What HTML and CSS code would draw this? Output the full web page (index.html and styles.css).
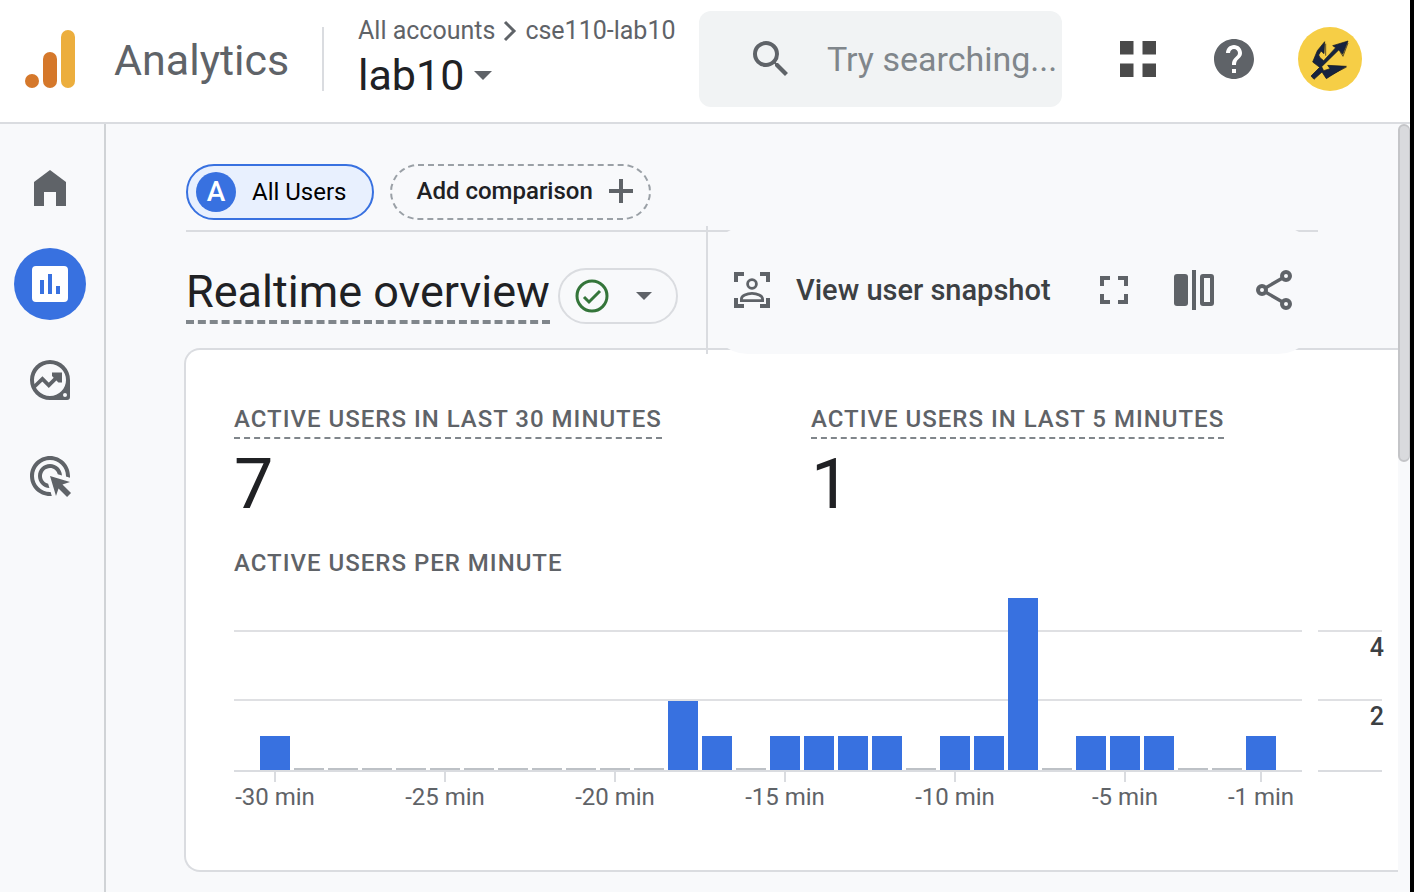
FILE: index.html
```html
<!DOCTYPE html>
<html lang="en">
<head>
<meta charset="utf-8">
<meta name="viewport" content="width=device-width, initial-scale=1">
<title>Analytics | Realtime overview</title>
<link rel="stylesheet" href="styles.css">
</head>
<body>
<header class="topbar">
  <a class="brand" href="#">
    <svg class="brand-logo" viewBox="0 0 52 60" aria-hidden="true">
      <circle cx="8" cy="52" r="7" fill="#d5782b"/>
      <rect x="19" y="23" width="14" height="36" rx="7" fill="#d5782b"/>
      <rect x="37" y="1" width="14" height="58" rx="7" fill="#ecae3d"/>
    </svg>
    <span class="brand-name">Analytics</span>
  </a>
  <div class="account">
    <nav class="crumbs" aria-label="Account">
      <a href="#">All accounts</a>
      <svg class="crumb-arrow" viewBox="0 0 14 22" aria-hidden="true"><path d="M2 2l9 9-9 9" fill="none" stroke="#5f6368" stroke-width="3"/></svg>
      <a href="#">cse110-lab10</a>
    </nav>
    <button class="property" type="button">lab10
      <svg class="caret" viewBox="0 0 18 9" aria-hidden="true"><path d="M0 0h18l-9 9z"/></svg>
    </button>
  </div>
  <label class="search">
    <svg class="icon" viewBox="0 0 24 24" aria-hidden="true"><path d="M15.5 14h-.79l-.28-.27A6.471 6.471 0 0 0 16 9.5 6.5 6.5 0 1 0 9.5 16c1.61 0 3.09-.59 4.23-1.57l.27.28v.79l5 4.99L20.49 19l-4.99-5zm-6 0C7.01 14 5 11.99 5 9.5S7.01 5 9.5 5 14 7.01 14 9.5 11.99 14 9.5 14z"/></svg>
    <input class="search-input" type="text" placeholder="Try searching..." aria-label="Search">
  </label>
  <div class="top-actions">
    <button class="icon-button" type="button" aria-label="Apps">
      <svg class="icon apps" viewBox="0 0 48 48" aria-hidden="true"><path d="M6 6h13.500v13.500H6zM28.500 6H42v13.500H28.500zM6 28.500h13.500V42H6zM28.500 28.500H42V42H28.500z"/></svg>
    </button>
    <button class="icon-button" type="button" aria-label="Help">
      <svg class="icon" viewBox="0 0 24 24" aria-hidden="true"><path d="M12 2C6.480 2 2 6.480 2 12s4.480 10 10 10 10-4.480 10-10S17.520 2 12 2zm1 17h-2v-2h2v2zm2.070-7.750l-.9.920C13.450 12.900 13 13.500 13 15h-2v-.5c0-1.100.45-2.100 1.170-2.830l1.240-1.260c.37-.36.59-.86.59-1.410 0-1.100-.9-2-2-2s-2 .9-2 2H8c0-2.210 1.790-4 4-4s4 1.790 4 4c0 .88-.36 1.680-.93 2.250z"/></svg>
    </button>
    <button class="icon-button" type="button" aria-label="Profile">
      <svg class="avatar" viewBox="0 0 192 192" aria-hidden="true">
        <circle cx="96" cy="96" r="96" fill="#f6ce46"/>
        <path d="M83 50v36M150 48l-15 40-8-12M90 148l56-28" fill="none" stroke="#17171a" stroke-width="2"/>
        <path fill="#16233f" stroke="#101722" stroke-width="2" stroke-linejoin="round" d="M150 42l-46 14 9 6-36 39-11-9-4-8 7-12 9 8 2-36-22 27-14 34 21 16-26 26 9 10 24-22 13 20 14-9 46-28-56-3 7 10-19 6-6-12 51-50 12 13z"/>
      </svg>
    </button>
  </div>
</header>
<div class="shell">
  <nav class="rail" aria-label="Sections">
    <a class="rail-link" href="#" aria-label="Home"><svg class="icon" viewBox="0 0 24 24" aria-hidden="true"><path d="M4 21V9l8-6 8 6v12h-5v-7H9v7z"/></svg></a>
    <a class="rail-link rail-link-active" href="#" aria-label="Reports" aria-current="page"><svg class="icon" viewBox="0 0 24 24" aria-hidden="true"><path fill-rule="evenodd" d="M5 3h14a2 2 0 0 1 2 2v14a2 2 0 0 1-2 2H5a2 2 0 0 1-2-2V5a2 2 0 0 1 2-2zM7 10v7h2v-7zM11 7v10h2V7zM15 13v4h2v-4z"/></svg></a>
    <a class="rail-link" href="#" aria-label="Explore"><svg class="icon" viewBox="0 0 24 24" aria-hidden="true"><path fill-rule="evenodd" d="M12 2a10 10 0 0 1 10 10v8.500a1.500 1.500 0 0 1-1.500 1.500H12a10 10 0 0 1 0-20zM12 4a8 8 0 1 0 0 16 8 8 0 0 0 0-16zM19.500 18.500a1 1 0 1 0 0 2 1 1 0 0 0 0-2z"/><path d="M3.500 16l4.700-4.500 3.200 3.200L16.500 9.600" fill="none" stroke="#5f6368" stroke-width="1.900"/><path d="M13 8.200h5v5h-1.800l-3.200-3.200z"/></svg></a>
    <a class="rail-link" href="#" aria-label="Advertising"><svg class="icon" viewBox="0 0 24 24" aria-hidden="true"><path d="M11.710 17.990C8.530 17.840 6 15.220 6 12c0-3.310 2.690-6 6-6 3.220 0 5.840 2.530 5.990 5.710l-2.100-.63C15.480 9.310 13.890 8 12 8c-2.210 0-4 1.790-4 4 0 1.890 1.310 3.480 3.080 3.890zM22 12c0 .3-.01.6-.04.9l-1.970-.59C20 12.210 20 12.100 20 12c0-4.420-3.580-8-8-8s-8 3.580-8 8 3.580 8 8 8c.1 0 .21 0 .31-.01l.59 1.970c-.3.03-.6.04-.9.04C6.480 22 2 17.520 2 12S6.480 2 12 2s10 4.480 10 10zM18.230 16.260L22 15l-10-3 3 10 1.260-3.770 4.270 4.270 1.980-1.980z"/></svg></a>
  </nav>
  <main class="content">
    <div class="chips">
      <button class="chip" type="button"><span class="chip-badge">A</span>All Users</button>
      <button class="chip chip-add" type="button">Add comparison
        <svg class="plus" viewBox="0 0 24 24" aria-hidden="true"><path d="M12 0v24M0 12h24" stroke="#5f6368" stroke-width="4"/></svg>
      </button>
    </div>
    <div class="title-row">
      <h1 class="title">Realtime overview</h1>
      <button class="status" type="button" aria-label="Data quality">
        <svg class="status-icon" viewBox="0 0 40 40" aria-hidden="true" fill="none" stroke="#34753a"><circle cx="20" cy="20" r="15" stroke-width="3"/><path d="M12 21l5 5 11-11" stroke-width="3"/></svg>
        <svg class="caret caret-small" viewBox="0 0 18 9" aria-hidden="true"><path d="M0 0h18l-9 9z"/></svg>
      </button>
      <div class="toolbar-frame">
        <div class="toolbar">
          <button class="snapshot" type="button">
            <svg class="icon" viewBox="0 0 24 24" aria-hidden="true"><path d="M3 3h5v2H5v3H3zM16 3h5v5h-2V5h-3zM3 16h2v3h3v2H3zM19 16h2v5h-5v-2h3z"/><g fill="none" stroke="#5f6368" stroke-width="1.400"><circle cx="12" cy="9" r="2.200"/><path d="M6.700 17.300v-.8c0-1.500 2.700-2.800 5.300-2.800s5.300 1.300 5.300 2.800v.8z"/></g></svg>
            View user snapshot
          </button>
          <button class="icon-button" type="button" aria-label="Full screen"><svg class="icon" viewBox="0 0 24 24" aria-hidden="true"><path d="M5 5h5v2H7v3H5zM14 5h5v5h-2V7h-3zM5 14h2v3h3v2H5zM17 14h2v5h-5v-2h3z"/></svg></button>
          <button class="icon-button" type="button" aria-label="Compare"><svg class="icon" viewBox="0 0 24 24" aria-hidden="true"><rect x="2" y="4" width="7" height="16" rx="1.500"/><path d="M11 2h2v20h-2z"/><rect x="16" y="5" width="5" height="14" rx=".5" fill="none" stroke="#5f6368" stroke-width="2"/></svg></button>
          <button class="icon-button" type="button" aria-label="Share"><svg class="icon" viewBox="0 0 24 24" aria-hidden="true"><g fill="none" stroke="#5f6368"><path d="M7.500 11.100l9-5.200M7.500 12.900l9 5.200" stroke-width="1.700"/><g stroke-width="2"><circle cx="18" cy="5" r="2"/><circle cx="6" cy="12" r="2"/><circle cx="18" cy="19" r="2"/></g></g></svg></button>
        </div>
      </div>
    </div>
    <section class="card">
      <div class="metrics">
        <div class="metric"><h2 class="label label-dashed">ACTIVE USERS IN LAST 30 MINUTES</h2><p class="value">7</p></div>
        <div class="metric"><h2 class="label label-dashed">ACTIVE USERS IN LAST 5 MINUTES</h2><p class="value">1</p></div>
      </div>
      <h2 class="label">ACTIVE USERS PER MINUTE</h2>
      <div class="chart">
        <div class="chart-main">
          <div class="plot">
            <i class="gridline gridline-4"></i><i class="gridline gridline-2"></i>
            <i class="bar" style="height:20%"></i><i class="bar zero"></i><i class="bar zero"></i><i class="bar zero"></i><i class="bar zero"></i><i class="bar zero"></i>
            <i class="bar zero"></i><i class="bar zero"></i><i class="bar zero"></i><i class="bar zero"></i><i class="bar zero"></i><i class="bar zero"></i>
            <i class="bar" style="height:40%"></i><i class="bar" style="height:20%"></i><i class="bar zero"></i><i class="bar" style="height:20%"></i><i class="bar" style="height:20%"></i><i class="bar" style="height:20%"></i>
            <i class="bar" style="height:20%"></i><i class="bar zero"></i><i class="bar" style="height:20%"></i><i class="bar" style="height:20%"></i><i class="bar" style="height:100%"></i><i class="bar zero"></i>
            <i class="bar" style="height:20%"></i><i class="bar" style="height:20%"></i><i class="bar" style="height:20%"></i><i class="bar zero"></i><i class="bar zero"></i><i class="bar" style="height:20%"></i>
          </div>
          <div class="x-axis">
            <span class="tick">-30 min</span><span></span><span></span><span></span><span></span>
            <span class="tick">-25 min</span><span></span><span></span><span></span><span></span>
            <span class="tick">-20 min</span><span></span><span></span><span></span><span></span>
            <span class="tick">-15 min</span><span></span><span></span><span></span><span></span>
            <span class="tick">-10 min</span><span></span><span></span><span></span><span></span>
            <span class="tick">-5 min</span><span></span><span></span><span></span><span class="tick">-1 min</span>
          </div>
        </div>
        <div class="y-axis">
          <i class="gridline gridline-4"></i><i class="gridline gridline-2"></i>
          <span class="y-label y-label-4">4</span><span class="y-label y-label-2">2</span>
        </div>
      </div>
    </section>
  </main>
  <div class="scroll-track" aria-hidden="true"><div class="scroll-thumb"></div></div>
</div>
</body>
</html>
```
FILE: styles.css
```css
:root {
  --ink: #202124;
  --muted: #5f6368;
  --line: #dadce0;
  --blue: #3871e0;
  --page: #f8f9fb;
  --display: "Google Sans", Roboto, "Liberation Sans", sans-serif;
}

* { box-sizing: border-box; }

body {
  margin: 0;
  min-height: 100vh;
  display: flex;
  flex-direction: column;
  border-right: 4px solid #000;
  background: var(--page);
  color: var(--ink);
  font: 24px/32px Roboto, "Liberation Sans", sans-serif;
}

h1, h2, p { margin: 0; font-weight: 400; }
a { color: inherit; text-decoration: none; }

button {
  display: flex;
  align-items: center;
  padding: 0;
  border: 0;
  background: none;
  color: inherit;
  font: inherit;
  white-space: nowrap;
  cursor: pointer;
}

svg { display: block; flex: none; }
.icon { width: 48px; height: 48px; fill: var(--muted); }
.icon.apps { fill: #4a4a4a; }
.caret { width: 18px; height: 9px; fill: var(--muted); }
.caret-small { width: 16px; height: 8px; }

.topbar {
  display: flex;
  align-items: center;
  height: 124px;
  padding: 0 48px 4px 24px;
  border-bottom: 2px solid var(--line);
  background: #fff;
}

.brand {
  display: flex;
  align-items: center;
  flex: 0 0 300px;
  height: 64px;
  border-right: 2px solid var(--line);
}
.brand-logo { width: 52px; height: 60px; margin-right: 38px; }
.brand-name { padding-top: 2px; color: var(--muted); font: 43px/48px var(--display); }

.account { flex: 0 0 375px; padding-left: 34px; }
.crumbs { display: flex; align-items: center; gap: 8px; color: var(--muted); font-size: 25px; }
.crumb-arrow { width: 14px; height: 22px; }
.property { gap: 10px; font: 43px/56px var(--display); }

.search {
  display: flex;
  align-items: center;
  flex: 1;
  min-width: 0;
  height: 96px;
  padding-left: 48px;
  border-radius: 12px;
  background: #f1f3f4;
}
.search-input {
  flex: 1;
  min-width: 0;
  margin-left: 32px;
  padding: 0;
  border: 0;
  outline: 0;
  background: none;
  color: var(--ink);
  font: 34px/48px var(--display);
}
.search-input::placeholder { color: #80868b; opacity: 1; }

.top-actions { display: flex; align-items: center; gap: 48px; padding-left: 52px; }
.top-actions .icon-button:last-child { margin-left: -8px; }
.avatar { width: 64px; height: 64px; }

.shell { display: flex; flex: 1; }

.rail {
  display: flex;
  flex-direction: column;
  gap: 24px;
  flex: 0 0 106px;
  padding: 28px 0 0 14px;
  border-right: 2px solid #d0d3d6;
}
.rail-link {
  display: flex;
  align-items: center;
  justify-content: center;
  width: 72px;
  height: 72px;
  border-radius: 50%;
}
.rail-link-active { background: var(--blue); }
.rail-link-active .icon { fill: #fff; }

.content { flex: 1; min-width: 0; padding-top: 40px; }

.chips {
  display: flex;
  gap: 16px;
  margin: 0 80px;
  padding-bottom: 10px;
  border-bottom: 2px solid var(--line);
}
.chip {
  height: 56px;
  padding: 0 26px 0 8px;
  border: 2px solid var(--blue);
  border-radius: 28px;
  background: #e8f0fe;
  color: #000;
  font-family: var(--display);
}
.chip-badge {
  width: 40px;
  height: 40px;
  margin-right: 16px;
  border-radius: 50%;
  background: var(--blue);
  color: #fff;
  font-size: 28px;
  font-weight: 500;
  line-height: 40px;
}
.chip-add {
  gap: 16px;
  padding: 0 16px 2px 24px;
  border: 2px dashed #9aa0a6;
  background: none;
  color: var(--ink);
  font-weight: 500;
}
.plus { width: 24px; height: 24px; }

.title-row {
  display: flex;
  align-items: center;
  height: 116px;
  margin: 0 80px;
}
.title {
  margin-top: 8px;
  border-bottom: 4px dashed #80868b;
  font: 45px/56px var(--display);
  white-space: nowrap;
}
.status {
  justify-content: space-between;
  flex: 0 0 120px;
  height: 56px;
  margin: 12px 0 0 8px;
  padding: 0 24px 0 12px;
  border: 2px solid var(--line);
  border-radius: 28px;
}
.status-icon { width: 40px; height: 40px; }

.toolbar-frame {
  position: relative;
  z-index: 1;
  align-self: stretch;
  display: flex;
  margin: -6px 0 -6px auto;
  border-left: 2px solid var(--line);
}
.toolbar {
  display: flex;
  align-items: center;
  gap: 32px;
  padding: 0 20px;
  border-radius: 40px;
  background: var(--page);
}
.snapshot {
  gap: 20px;
  min-width: 330px;
  color: #3c4043;
  font: 500 29px/40px var(--display);
}

.card {
  margin-left: 78px;
  padding: 51px 16px 58px 48px;
  border: 2px solid var(--line);
  border-right: 0;
  border-radius: 16px 0 0 16px;
  background: #fff;
}
.metrics { display: grid; grid-template-columns: 1fr 1fr; margin-right: -6px; }
.label { color: var(--muted); font-size: 24px; font-weight: 500; line-height: 36px; letter-spacing: 1px; }
.label-dashed { display: inline-block; border-bottom: 2px dashed #80868b; }
.value { padding-bottom: 16px; font: 70px/90px var(--display); }

.chart { display: flex; gap: 16px; padding-top: 17px; }
.chart-main { flex: 1; min-width: 0; }
.plot, .x-axis {
  display: grid;
  grid-template-columns: repeat(30, minmax(0, 1fr));
  column-gap: 4px;
  padding: 0 26px;
}
.plot, .y-axis {
  position: relative;
  height: 174px;
  border-bottom: 2px solid var(--line);
}
.plot { align-items: end; }
.bar { position: relative; background: var(--blue); }
.zero { height: 2px; background: #bdc1c6; }

.gridline { position: absolute; left: 0; right: 0; height: 2px; background: #dfe0e3; }
.gridline-4 { bottom: 80%; }
.gridline-2 { bottom: 40%; }

.tick {
  display: flex;
  flex-direction: column;
  align-items: center;
  color: var(--muted);
  line-height: 30px;
  white-space: nowrap;
}
.tick::before { content: ""; width: 2px; height: 10px; background: var(--line); }

.y-axis { flex: 0 0 64px; color: #3c4043; font-size: 25px; font-weight: 500; }
.y-label { position: absolute; right: -2px; }
.y-label-4 { top: 20%; }
.y-label-2 { top: 60%; }

.scroll-track { flex: 0 0 12px; }
.scroll-thumb {
  height: 44%;
  border: 2px solid #c4c5c8;
  border-right-width: 1px;
  border-radius: 6px;
  background: #d9dadd;
}
```
